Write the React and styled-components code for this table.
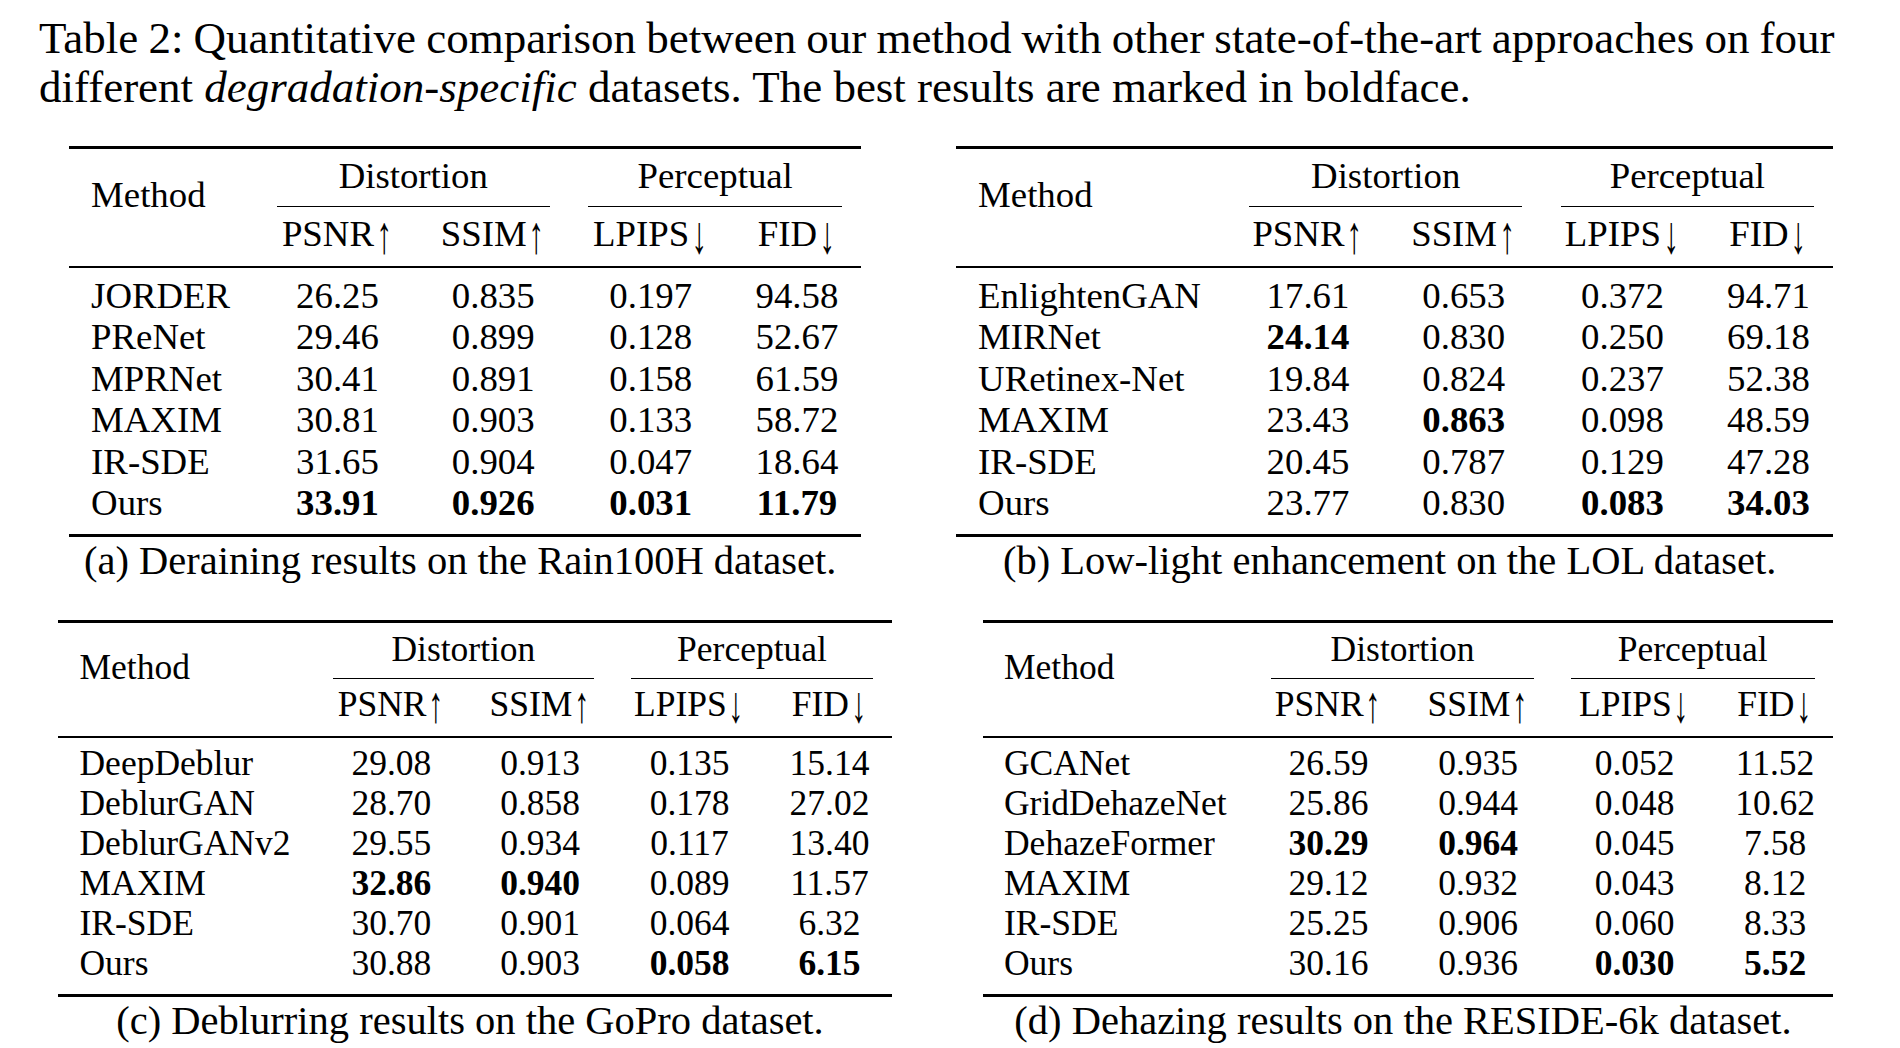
import React from "react"
import styled, { createGlobalStyle } from "styled-components"

const GlobalStyle = createGlobalStyle`
    html, body {
        margin: 0;
        padding: 0;
        background: #fff;
    }
    body {
        font-family: "Liberation Serif", "Times New Roman", serif;
        color: #000;
    }
`

const Page = styled.div`
    width: 1900px;
    height: 1048px;
    overflow: hidden;
`

const Title = styled.div`
    padding: 14px 0 0 39px;
    font-size: 45px;
    line-height: 48.5px;
    white-space: nowrap;
`

const TitleLine = styled.span`
    display: block;
    word-spacing: ${p => p.$tight ? "-1.1px" : "0"};
`

const Figures = styled.div`
    display: grid;
    grid-template-columns: 920px 980px;
    row-gap: 35.8px;
    margin-top: 35px;
`

const Sub = styled.figure`
    margin: 0 0 0 ${p => p.$left}px;
    width: ${p => p.$width}px;
`

const Grid = styled.div`
    display: grid;
    grid-template-columns: ${p => p.$cols.map(c => c + "px").join(" ")};
    font-size: ${p => p.$fs}px;
`

const Rule = styled.div`
    grid-column: ${p => p.$cols || "1 / -1"};
    grid-row: ${p => p.$row || "auto"};
    height: ${p => p.$weight}px;
    background: #000;
    margin: ${p => p.$margin || "0"};
`

const MethodHead = styled.div`
    grid-column: 1;
    grid-row: 2 / 5;
    padding: 0.665em 0 0 0.6em;
    line-height: 1.2em;
`

const GroupHead = styled.div`
    grid-column: ${p => p.$cols};
    grid-row: 2;
    text-align: center;
    line-height: 1.486em;
`

const MetricHead = styled.div`
    grid-row: 4;
    text-align: center;
    line-height: 1.443em;
    white-space: nowrap;
`

const Arrow = styled.span`
    display: inline-block;
    margin-left: 0.02em;
    transform: translateY(0.1em) scale(0.85, 1.45);
    transform-origin: 50% 60%;
`

const Name = styled.div`
    padding-left: 0.6em;
    line-height: 1.126em;
    white-space: nowrap;
`

const Value = styled.div`
    text-align: center;
    line-height: 1.126em;
    font-weight: ${p => (p.$best ? 700 : 400)};
`

const Caption = styled.figcaption`
    font-size: 40.5px;
    line-height: 47px;
    text-align: center;
    white-space: nowrap;
    margin-right: 10px;
`

const tables = [
    {
        id: "a",
        left: 69,
        fs: 36.8,
        cols: [188.5, 160, 151.5, 163.4, 129],
        caption: "(a) Deraining results on the Rain100H dataset.",
        rows: [
            ["JORDER", ["26.25", "0.835", "0.197", "94.58"], []],
            ["PReNet", ["29.46", "0.899", "0.128", "52.67"], []],
            ["MPRNet", ["30.41", "0.891", "0.158", "61.59"], []],
            ["MAXIM", ["30.81", "0.903", "0.133", "58.72"], []],
            ["IR-SDE", ["31.65", "0.904", "0.047", "18.64"], []],
            ["Ours", ["33.91", "0.926", "0.031", "11.79"], [0, 1, 2, 3]],
        ],
    },
    {
        id: "b",
        left: 36,
        fs: 36.8,
        cols: [274, 156, 155.4, 162.2, 129.8],
        caption: "(b) Low-light enhancement on the LOL dataset.",
        rows: [
            ["EnlightenGAN", ["17.61", "0.653", "0.372", "94.71"], []],
            ["MIRNet", ["24.14", "0.830", "0.250", "69.18"], [0]],
            ["URetinex-Net", ["19.84", "0.824", "0.237", "52.38"], []],
            ["MAXIM", ["23.43", "0.863", "0.098", "48.59"], [1]],
            ["IR-SDE", ["20.45", "0.787", "0.129", "47.28"], []],
            ["Ours", ["23.77", "0.830", "0.083", "34.03"], [2, 3]],
        ],
    },
    {
        id: "c",
        left: 58.2,
        fs: 35.5,
        cols: [256.5, 153.4, 144, 155, 124.8],
        caption: "(c) Deblurring results on the GoPro dataset.",
        rows: [
            ["DeepDeblur", ["29.08", "0.913", "0.135", "15.14"], []],
            ["DeblurGAN", ["28.70", "0.858", "0.178", "27.02"], []],
            ["DeblurGANv2", ["29.55", "0.934", "0.117", "13.40"], []],
            ["MAXIM", ["32.86", "0.940", "0.089", "11.57"], [0, 1]],
            ["IR-SDE", ["30.70", "0.901", "0.064", "6.32"], []],
            ["Ours", ["30.88", "0.903", "0.058", "6.15"], [2, 3]],
        ],
    },
    {
        id: "d",
        left: 62.7,
        fs: 35.5,
        cols: [270.3, 151, 148.2, 164.8, 116.2],
        caption: "(d) Dehazing results on the RESIDE-6k dataset.",
        rows: [
            ["GCANet", ["26.59", "0.935", "0.052", "11.52"], []],
            ["GridDehazeNet", ["25.86", "0.944", "0.048", "10.62"], []],
            ["DehazeFormer", ["30.29", "0.964", "0.045", "7.58"], [0, 1]],
            ["MAXIM", ["29.12", "0.932", "0.043", "8.12"], []],
            ["IR-SDE", ["25.25", "0.906", "0.060", "8.33"], []],
            ["Ours", ["30.16", "0.936", "0.030", "5.52"], [2, 3]],
        ],
    },
]

const metrics = [
    ["PSNR", "↑"],
    ["SSIM", "↑"],
    ["LPIPS", "↓"],
    ["FID", "↓"],
]

const SubTable = ({ t }) => {
    const width = t.cols.reduce((a, b) => a + b, 0)

    return (
        <Sub $left={t.left} $width={width}>
            <Grid $cols={t.cols} $fs={t.fs}>
                <Rule $row="1" $weight={3} />
                <MethodHead>Method</MethodHead>
                <GroupHead $cols="2 / 4">Distortion</GroupHead>
                <GroupHead $cols="4 / 6">Perceptual</GroupHead>
                <Rule $row="3" $cols="2 / 4" $weight={1.2} $margin="0.07em 0.52em 0" />
                <Rule $row="3" $cols="4 / 6" $weight={1.2} $margin="0.07em 0.52em 0" />
                {metrics.map(([label, dir]) => (
                    <MetricHead key={label}>
                        {label}<Arrow>{dir}</Arrow>
                    </MetricHead>
                ))}
                <Rule $row="5" $weight={2} $margin="0.157em 0 0.18em" />
                {t.rows.map(([name, vals, best]) => (
                    <React.Fragment key={name}>
                        <Name>{name}</Name>
                        {vals.map((v, i) => (
                            <Value key={i} $best={best.includes(i)}>{v}</Value>
                        ))}
                    </React.Fragment>
                ))}
                <Rule $weight={3} $margin="0.28em 0 0" />
            </Grid>
            <Caption>{t.caption}</Caption>
        </Sub>
    )
}

const App = () => {
    return (
        <Page>
            <GlobalStyle />
            <Title>
                <TitleLine $tight>
                    Table 2: Quantitative comparison between our method with other state-of-the-art approaches on four
                </TitleLine>
                <TitleLine>
                    different <i>degradation-specific</i> datasets. The best results are marked in boldface.
                </TitleLine>
            </Title>
            <Figures>
                {tables.map(t => (
                    <SubTable key={t.id} t={t} />
                ))}
            </Figures>
        </Page>
    )
}

export default App
